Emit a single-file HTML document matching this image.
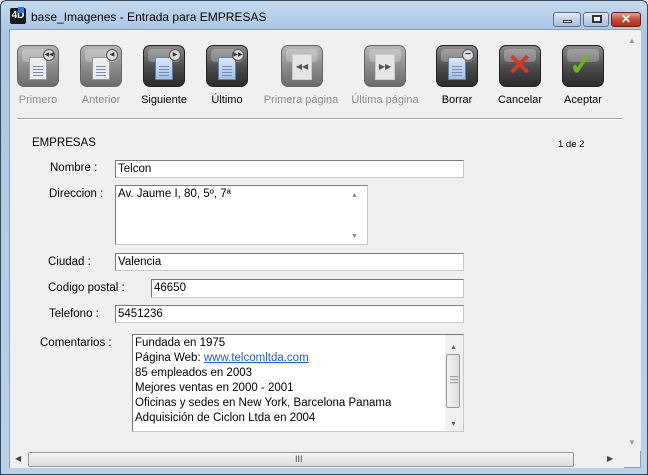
<!DOCTYPE html>
<html><head><meta charset="utf-8"><style>
*{box-sizing:border-box;margin:0;padding:0}
body{width:648px;height:475px;overflow:hidden;font-family:"Liberation Sans",sans-serif;font-size:11.5px;color:#000;background:#fff}
.win{position:absolute;left:0;top:0;width:648px;height:475px;border:1px solid #3a4a5c;border-radius:6px 6px 0 0;background:linear-gradient(#c4daef,#a9c6e4 30px,#b8d2ea)}
.client{position:absolute;left:8px;top:28px;width:632px;height:439px;background:#f0f0f0;border:1px solid #8aa0b8}
.abs{position:absolute}
.title{left:30px;top:9px;font-size:12px}
.tb{position:absolute;top:11px;height:15px;border:1px solid #5a6e85;border-radius:3px;background:linear-gradient(#e6eef7,#c0d2e6 50%,#a9c0da)}
.btn{position:absolute;top:45px;width:42px;height:42px;border-radius:7px;background:linear-gradient(#8a8a8a,#4a4a4a 55%,#2a2a2a);border:1px solid #222}
.btn.dis{background:linear-gradient(#b6b6b6,#8a8a8a 55%,#6c6c6c);border-color:#666}
.btn i{position:absolute;left:4px;top:3px;right:4px;height:13px;border-radius:4px;background:rgba(255,255,255,.25)}
.lbl{position:absolute;top:94px;font-size:11px;text-align:center;width:80px}
.lbl.g{color:#8d8d8d}
.inp{position:absolute;background:#fff;border:1px solid #7a7a7a;border-right-color:#c8c8c8;border-bottom-color:#c8c8c8;padding:1px 2px;font-size:11.5px;line-height:14px}
.fl{position:absolute;font-size:11.5px}
.doc{position:absolute;left:11px;top:11px;width:18px;height:23px;background:#ececec;border:1px solid #999}
.doc.b{background:linear-gradient(#dbe8fa,#9fc0ea);border-color:#5c80b0}
.doc s{position:absolute;left:3px;right:3px;height:1px;background:#7890b0}
.circ{position:absolute;right:3px;top:3px;width:12px;height:12px;border-radius:50%;background:#ddd;border:1px solid #555;font-size:6px;line-height:10px;text-align:center;color:#333}
</style></head><body>
<div class="win">
<div class="abs" style="left:9px;top:7px;width:16px;height:16px;background:#1a1a1a;border-radius:2px;color:#fff;font-size:10px;font-weight:bold;line-height:16px;text-align:center">4D</div>
<div class="abs" style="left:17px;top:6px;width:6px;height:6px;background:#2b7ae0"></div>
<div class="abs title">base_Imagenes - Entrada para EMPRESAS</div>
<div class="tb" style="left:552px;width:28px"><div class="abs" style="left:9px;top:7px;width:9px;height:3px;background:#fff;border:1px solid #333"></div></div>
<div class="tb" style="left:582px;width:26px"><div class="abs" style="left:8px;top:2px;width:10px;height:8px;border:2px solid #333;background:#fff"></div></div>
<div class="tb" style="left:610px;width:30px;background:linear-gradient(#e8a090,#c84a30 50%,#b03018);border-color:#6a2010;color:#fff;font-weight:bold;text-align:center;line-height:13px;font-size:12px">✕</div>
<div class="client">
<div class="abs" style="left:614px;top:0;width:17px;height:421px;background:#f0f0f0"><div class="abs" style="left:4px;top:6px;color:#999;font-size:8px">▲</div><div class="abs" style="left:4px;bottom:4px;color:#999;font-size:8px">▼</div></div>
<div class="abs" style="left:0;top:421px;width:614px;height:17px;background:#f0f0f0">
<div class="abs" style="left:5px;top:3px;font-size:8px;color:#444">◀</div>
<div class="abs" style="left:18px;top:1px;width:546px;height:15px;border:1px solid #999;border-radius:2px;background:linear-gradient(#f6f6f6,#dcdcdc)"><div class="abs" style="left:266px;top:1px;font-size:9px;color:#444">III</div></div>
<div class="abs" style="left:597px;top:3px;font-size:8px;color:#444">▶</div>
</div>
</div>
</div>
<div class="btn dis" style="left:17px"><i></i><div class="doc"><s style="top:8px"></s><s style="top:11px"></s><s style="top:14px"></s><s style="top:17px"></s></div><div class="circ">◀◀</div></div>
<div class="btn dis" style="left:80px"><i></i><div class="doc"><s style="top:8px"></s><s style="top:11px"></s><s style="top:14px"></s><s style="top:17px"></s></div><div class="circ">◀</div></div>
<div class="btn" style="left:143px"><i></i><div class="doc b"><s style="top:8px"></s><s style="top:11px"></s><s style="top:14px"></s><s style="top:17px"></s></div><div class="circ">▶</div></div>
<div class="btn" style="left:206px"><i></i><div class="doc b"><s style="top:8px"></s><s style="top:11px"></s><s style="top:14px"></s><s style="top:17px"></s></div><div class="circ">▶▶</div></div>
<div class="btn dis" style="left:281px"><i></i><div class="doc" style="left:10px;top:8px;width:20px;height:26px;background:#e6e6e6;border-color:#ccc;font-size:8px;text-align:center;line-height:24px;color:#555">◀◀</div></div>
<div class="btn dis" style="left:364px"><i></i><div class="doc" style="left:10px;top:8px;width:20px;height:26px;background:#e6e6e6;border-color:#ccc;font-size:8px;text-align:center;line-height:24px;color:#555">▶▶</div></div>
<div class="btn" style="left:436px"><i></i><div class="doc b"><s style="top:8px"></s><s style="top:11px"></s><s style="top:14px"></s><s style="top:17px"></s></div><div class="circ" style="font-size:10px;line-height:9px;font-weight:bold">−</div></div>
<div class="btn" style="left:499px"><i></i><div class="abs" style="left:7px;top:1px;color:#d23a2a;font-size:30px;font-weight:bold;line-height:38px">✕</div></div>
<div class="btn" style="left:562px"><i></i><div class="abs" style="left:6px;top:1px;color:#6ab820;font-size:30px;font-weight:bold;line-height:38px">✓</div></div>
<div class="lbl g" style="left:-2px">Primero</div>
<div class="lbl g" style="left:61px">Anterior</div>
<div class="lbl" style="left:124px">Siguiente</div>
<div class="lbl" style="left:187px">Último</div>
<div class="lbl g" style="left:251px;width:100px">Primera página</div>
<div class="lbl g" style="left:335px;width:100px">Última página</div>
<div class="lbl" style="left:417px">Borrar</div>
<div class="lbl" style="left:480px">Cancelar</div>
<div class="lbl" style="left:543px">Aceptar</div>
<div class="abs" style="left:17px;top:118px;width:605px;height:1px;background:#a0a0a0"></div>
<div class="abs" style="left:17px;top:119px;width:605px;height:1px;background:#fff"></div>
<div class="fl" style="left:32px;top:137px">EMPRESAS</div>
<div class="fl" style="left:558px;top:139px;font-size:9.5px">1 de 2</div>
<div class="fl" style="left:50px;top:162px">Nombre :</div>
<div class="inp" style="left:115px;top:160px;width:349px;height:18px">Telcon</div>
<div class="fl" style="left:49px;top:188px">Direccion :</div>
<div class="inp" style="left:115px;top:185px;width:253px;height:60px">Av. Jaume I, 80, 5º, 7ª<div class="abs" style="left:235px;top:3px;font-size:7px;color:#888">▲</div><div class="abs" style="left:235px;top:44px;font-size:7px;color:#888">▼</div></div>
<div class="fl" style="left:48px;top:256px">Ciudad :</div>
<div class="inp" style="left:115px;top:253px;width:349px;height:18px">Valencia</div>
<div class="fl" style="left:48px;top:282px">Codigo postal :</div>
<div class="inp" style="left:151px;top:279px;width:313px;height:19px">46650</div>
<div class="fl" style="left:49px;top:308px">Telefono :</div>
<div class="inp" style="left:115px;top:305px;width:349px;height:18px">5451236</div>
<div class="fl" style="left:40px;top:337px">Comentarios :</div>
<div class="inp" style="left:132px;top:334px;width:332px;height:98px;line-height:15px;padding-top:1px">Fundada en 1975<br>Página Web: <span style="color:#1a5fd0;text-decoration:underline">www.telcomltda.com</span><br>85 empleados en 2003<br>Mejores ventas en 2000 - 2001<br>Oficinas y sedes en New York, Barcelona Panama<br>Adquisición de Ciclon Ltda en 2004
<div class="abs" style="left:312px;top:0;width:18px;height:96px;background:#f0f0f0"><div class="abs" style="left:5px;top:5px;font-size:7px;color:#666">▲</div><div class="abs" style="left:1px;top:19px;width:14px;height:54px;border:1px solid #999;border-radius:2px;background:linear-gradient(90deg,#f4f4f4,#dcdcdc)"><div class="abs" style="left:3px;top:20px;font-size:8px;color:#555;line-height:3px">—<br>—<br>—</div></div><div class="abs" style="left:5px;top:82px;font-size:7px;color:#666">▼</div></div></div>
</body></html>
